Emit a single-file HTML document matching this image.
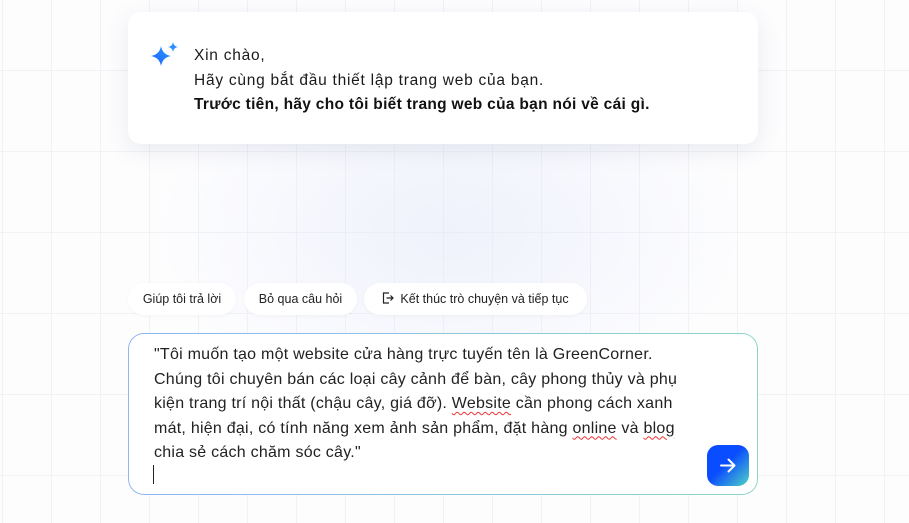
<!DOCTYPE html>
<html><head><meta charset="utf-8"><style>
*{margin:0;padding:0;box-sizing:border-box}
body{width:909px;height:523px;overflow:hidden;font-family:"Liberation Sans",sans-serif;color:#111;
background:
radial-gradient(ellipse 420px 260px at 450px 230px, rgba(225,230,250,.5), rgba(255,255,255,0) 70%),
linear-gradient(#f1f2f5 1px,transparent 1px) 0 70px/100% 81px,
linear-gradient(90deg,#f1f2f5 1px,transparent 1px) 2px 0/49px 100%,
#fdfdfe;position:relative}
.card{position:absolute;left:128px;top:12px;width:630px;height:132px;background:#fff;border-radius:13px;box-shadow:0 6px 24px rgba(60,70,120,.10)}
.card .t{position:absolute;left:66px;top:32px;font-size:15.5px;line-height:24.5px;color:#1a1a1a;white-space:nowrap}
.card .n{letter-spacing:.75px}
.card b{font-weight:bold;color:#111;letter-spacing:.3px}
.spark{position:absolute;left:22px;top:29px}
.chip{position:absolute;top:283px;height:32px;background:#fff;border-radius:16px;font-size:12.5px;line-height:32px;text-align:center;color:#222;box-shadow:0 1px 4px rgba(0,0,0,.04)}
.box{position:absolute;left:128px;top:333px;width:630px;height:162px;border-radius:16px;padding:1px;background:linear-gradient(90deg,#8fb4f5,#8fd6c8)}
.box .in{width:100%;height:100%;background:#fff;border-radius:15px;position:relative}
.txt{position:absolute;left:25px;top:9px;font-size:16px;line-height:24.5px;color:#222;white-space:nowrap;letter-spacing:.25px}
.sq{text-decoration:underline wavy #e33;text-decoration-thickness:1px;text-underline-offset:3px}
.cur{position:absolute;left:24px;top:131px;width:1px;height:19px;background:#222}
.send{position:absolute;left:578px;top:111px;width:42px;height:41px;border-radius:11px;background:linear-gradient(135deg,#0a4cff 45%,#4fd3c4)}
</style></head><body>
<div class="card">
<svg class="spark" width="30" height="28" viewBox="0 0 30 28"><defs><linearGradient id="g" x1="0" y1="1" x2="1" y2="0"><stop offset="0" stop-color="#1e5bff"/><stop offset="1" stop-color="#2b9dff"/></linearGradient></defs>
<path d="M11 5 Q12.5 13.5 21 15 Q12.5 16.5 11 25 Q9.5 16.5 1 15 Q9.5 13.5 11 5Z" fill="url(#g)"/>
<path d="M23 1 Q23.6 5.4 28 6 Q23.6 6.6 23 11 Q22.4 6.6 18 6 Q22.4 5.4 23 1Z" fill="#2b8dff"/></svg>
<div class="t"><span class="n">Xin chào,</span><br><span class="n">Hãy cùng bắt đầu thiết lập trang web của bạn.</span><br><b>Trước tiên, hãy cho tôi biết trang web của bạn nói về cái gì.</b></div>
</div>
<div class="chip" style="left:128px;width:108px">Giúp tôi trả lời</div>
<div class="chip" style="left:244px;width:113px">Bỏ qua câu hỏi</div>
<div class="chip" style="left:364px;width:223px"><svg width="12" height="12" viewBox="0 0 12 12" style="vertical-align:-1px;margin-right:6px"><path d="M7 1H1.5v10H7M4.5 6H11M8.5 3.5 11 6 8.5 8.5" fill="none" stroke="#222" stroke-width="1.2"/></svg>Kết thúc trò chuyện và tiếp tục</div>
<div class="box"><div class="in">
<div class="txt">"Tôi muốn tạo một website cửa hàng trực tuyến tên là GreenCorner.<br>Chúng tôi chuyên bán các loại cây cảnh để bàn, cây phong thủy và phụ<br>kiện trang trí nội thất (chậu cây, giá đỡ). <span class="sq">Website</span> cần phong cách xanh<br>mát, hiện đại, có tính năng xem ảnh sản phẩm, đặt hàng <span class="sq">online</span> và <span class="sq">blog</span><br>chia sẻ cách chăm sóc cây."</div>
<div class="cur"></div>
<div class="send"><svg width="42" height="41" viewBox="0 0 42 41"><path d="M14 20.5h13M21.5 14.5l6 6-6 6" fill="none" stroke="#fff" stroke-width="2" stroke-linecap="round" stroke-linejoin="round"/></svg></div>
</div></div>
</body></html>
